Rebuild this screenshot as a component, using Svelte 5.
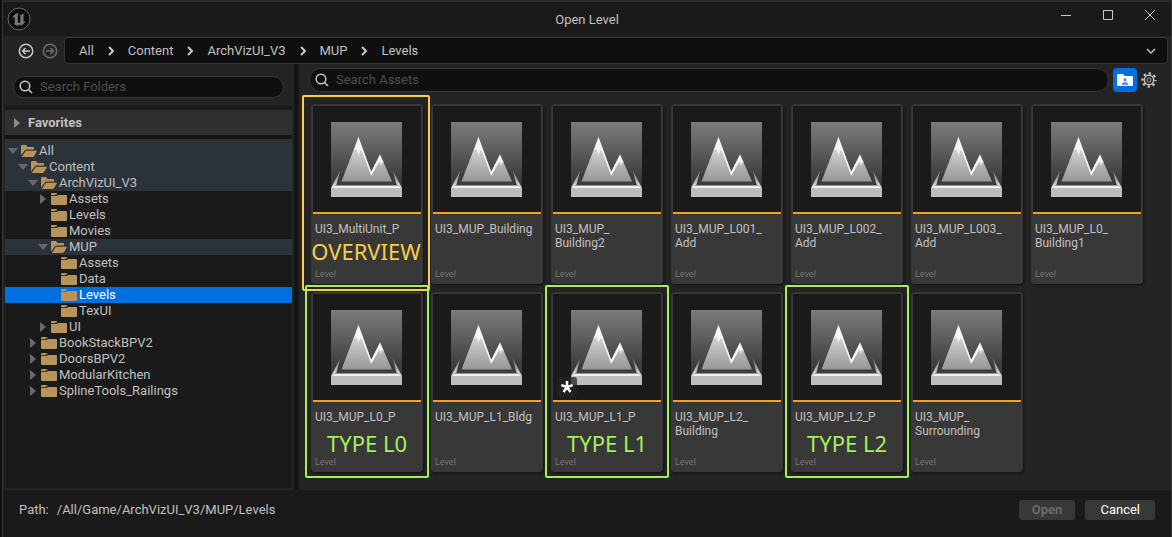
<script>
  const crumbs = ['All', 'Content', 'ArchVizUI_V3', 'MUP', 'Levels'];

  const folders = [
    { name: 'All', depth: 0, state: 'open', parent: true },
    { name: 'Content', depth: 1, state: 'open', parent: true },
    { name: 'ArchVizUI_V3', depth: 2, state: 'open', parent: true },
    { name: 'Assets', depth: 3, state: 'closed' },
    { name: 'Levels', depth: 3 },
    { name: 'Movies', depth: 3 },
    { name: 'MUP', depth: 3, state: 'open', parent: true },
    { name: 'Assets', depth: 4 },
    { name: 'Data', depth: 4 },
    { name: 'Levels', depth: 4 },
    { name: 'TexUI', depth: 4 },
    { name: 'UI', depth: 3, state: 'closed' },
    { name: 'BookStackBPV2', depth: 2, state: 'closed' },
    { name: 'DoorsBPV2', depth: 2, state: 'closed' },
    { name: 'ModularKitchen', depth: 2, state: 'closed' },
    { name: 'SplineTools_Railings', depth: 2, state: 'closed' },
  ];

  const assets = [
    { lines: ['UI3_MultiUnit_P'], note: 'OVERVIEW', kind: 'overview' },
    { lines: ['UI3_MUP_Building'] },
    { lines: ['UI3_MUP_', 'Building2'] },
    { lines: ['UI3_MUP_L001_', 'Add'] },
    { lines: ['UI3_MUP_L002_', 'Add'] },
    { lines: ['UI3_MUP_L003_', 'Add'] },
    { lines: ['UI3_MUP_L0_', 'Building1'] },
    { lines: ['UI3_MUP_L0_P'], note: 'TYPE L0', kind: 'type' },
    { lines: ['UI3_MUP_L1_Bldg'] },
    { lines: ['UI3_MUP_L1_P'], note: 'TYPE L1', kind: 'type', dirty: true },
    { lines: ['UI3_MUP_L2_', 'Building'] },
    { lines: ['UI3_MUP_L2_P'], note: 'TYPE L2', kind: 'type' },
    { lines: ['UI3_MUP_', 'Surrounding'] },
  ];

  let selected = $state(9);
  let folderQuery = $state('');
  let assetQuery = $state('');
</script>

<svelte:head>
  <title>Open Level</title>
</svelte:head>

{#snippet magnifier()}
  <svg class="magnifier" viewBox="0 0 14 14" aria-hidden="true">
    <circle cx="6" cy="6" r="4.8" />
    <path d="M9.5 9.5L13 13" />
  </svg>
{/snippet}

<!-- shared gradients for the level thumbnails -->
<svg class="defs" width="0" height="0" aria-hidden="true">
  <defs>
    <linearGradient id="sky" x1="0" y1="0" x2="0" y2="1">
      <stop offset="0" stop-color="#7c7c7c" />
      <stop offset="1" stop-color="#333" />
    </linearGradient>
    <linearGradient id="rock" x1="0" y1="0" x2="0" y2="1">
      <stop offset="0" stop-color="#e8e8e8" />
      <stop offset="1" stop-color="#979797" />
    </linearGradient>
    <linearGradient id="edge" x1="0" y1="0" x2="0" y2="1">
      <stop offset="0" stop-color="#999" stop-opacity="0.5" />
      <stop offset="1" stop-color="#f0f0f0" />
    </linearGradient>
  </defs>
</svg>

<div class="window">
  <header class="titlebar">
    <svg class="logo" viewBox="0 0 24 24" aria-hidden="true">
      <circle cx="12" cy="12" r="11" fill="#0c0c0c" stroke="#6c6c6c" />
      <path
        fill="#777"
        d="M10.6 6.1C8 6.9 5.9 8.8 5 12c.8-1.300 1.500-2 2.100-2 .5 0 .6.3.6.8v4.600c0 .7-.3.9-.9.8.9 1.400 2.400 2.300 4.300 2.500l1.300-1.300 1.400 1.100c2.200-.8 3.900-2.400 4.900-4.700-.7.7-1.300 1-1.700.9-.4-.1-.5-.3-.5-.8V8.700c0-.9.5-1.700 1.200-2.500-1.500.3-2.700 1-3.600 2-.4-.5-.8-.6-1.500-.7.5.4.7.8.7 1.400v6.300c-.3.4-.8.700-1.300.7-.8 0-1.200-.5-1.200-1.300V8.200c0-.9.200-1.500.8-2.100z"
      />
    </svg>
    <h1>Open Level</h1>
    <div class="controls">
      <button aria-label="Minimize">
        <svg viewBox="0 0 12 12"><path d="M1 6.500h10" /></svg>
      </button>
      <button aria-label="Maximize">
        <svg viewBox="0 0 12 12"><path d="M1.500 1.500h9v9h-9z" /></svg>
      </button>
      <button aria-label="Close">
        <svg viewBox="0 0 12 12"><path d="M1 1l10 10M11 1L1 11" /></svg>
      </button>
    </div>
  </header>

  <nav class="navbar">
    <div class="arrows">
      <button aria-label="Back">
        <svg viewBox="0 0 16 16">
          <circle cx="8" cy="8" r="6.700" />
          <path d="M12 8H4.800M7.500 5L4.500 8l3 3" />
        </svg>
      </button>
      <button aria-label="Forward" disabled>
        <svg viewBox="0 0 16 16">
          <circle cx="8" cy="8" r="6.700" />
          <path d="M4 8h7.200M8.500 5l3 3-3 3" />
        </svg>
      </button>
    </div>
    <div class="path-bar">
      {#each crumbs as crumb, i}
        {#if i > 0}
          <svg class="chevron" viewBox="0 0 8 10" aria-hidden="true"><path d="M2 1l4 4-4 4" /></svg>
        {/if}
        <a href="#{crumb}">{crumb}</a>
      {/each}
      <button class="history" aria-label="Path history">
        <svg viewBox="0 0 10 8"><path d="M1 2l4 4 4-4" /></svg>
      </button>
    </div>
  </nav>

  <div class="body">
    <aside class="sources">
      <label class="search">
        {@render magnifier()}
        <input type="text" aria-label="Search Folders" placeholder="Search Folders" bind:value={folderQuery} />
      </label>

      <button class="favorites">
        <svg viewBox="0 0 6 10" aria-hidden="true"><path d="M0 0l6 5-6 5z" /></svg>
        Favorites
      </button>

      <div class="tree">
        {#each folders as folder, i}
          <button
            class="row"
            class:parent={folder.parent}
            class:selected={selected === i}
            style="padding-left: {3 + folder.depth * 10}px"
            onclick={() => (selected = i)}
          >
            <svg class="expander" viewBox="0 0 10 10" aria-hidden="true">
              {#if folder.state === 'open'}
                <path d="M0 2h10L5 8z" />
              {:else if folder.state === 'closed'}
                <path d="M2 0l6 5-6 5z" />
              {/if}
            </svg>
            <svg class="folder" viewBox="0 0 16 12" aria-hidden="true">
              {#if folder.state === 'open'}
                <path d="M0 10.500V1q0-1 1-1h4l1.500 2H12q1 0 1 1v1.500H5.500q-1 0-1.500.8z" />
                <path d="M.8 12l3.700-5.700q.3-.5 1-.5H15.500q.7 0 .3.700L12.900 11.300q-.4.700-1.200.7z" />
              {:else}
                <path d="M0 2.200V1q0-1 1-1h4.500l1.200 1.400h-2.500L4.900 2.200z" />
                <path d="M0 3h6l.8-1H15q1 0 1 1v8q0 1-1 1H1q-1 0-1-1z" />
              {/if}
            </svg>
            <span>{folder.name}</span>
          </button>
        {/each}
      </div>
    </aside>

    <main class="assets">
      <div class="toolbar">
        <label class="search">
          {@render magnifier()}
          <input type="text" aria-label="Search Assets" placeholder="Search Assets" bind:value={assetQuery} />
        </label>
        <button class="toggle" aria-label="Show developer folders">
          <svg viewBox="0 0 16 14">
            <path fill="#fff" d="M0 2q0-1 1-1h5l1.500 2H15q1 0 1 1v8q0 1-1 1H1q-1 0-1-1z" />
            <circle cx="8" cy="6.800" r="1.800" fill="#5b9be0" />
            <path fill="#5b9be0" d="M4.500 12q0-3 3.500-3t3.500 3z" />
          </svg>
        </button>
        <button class="gear" aria-label="Settings">
          <svg viewBox="0 0 16 16">
            <circle cx="8" cy="8" r="6.500" stroke-width="2.400" stroke-dasharray="2.300 2.805" stroke-dashoffset="1.150" />
            <circle cx="8" cy="8" r="4.700" stroke-width="1.500" />
            <circle cx="8" cy="8" r="1.900" stroke-width="1.200" stroke="#888" />
          </svg>
        </button>
      </div>

      <div class="grid">
        {#each assets as asset}
          <article class="card">
            <div class="thumb">
              <svg viewBox="0 0 72 75" aria-hidden="true">
                <path fill="url(#sky)" d="M0 0h71v65H0z" />
                <path fill="#3c3c3c" d="M8 52h55l4 12H4z" />
                <path fill="url(#edge)" d="M9.500 48L5.500 62.500 0 66z" />
                <path fill="url(#edge)" d="M61.500 48l4 14.500L71 66z" />
                <path fill="url(#rock)" d="M10.500 59.500L27.500 15l12.700 36.500L49 32.500l12 27z" />
                <path fill="#f4f4f4" d="M27.500 15l12.700 34.500L49 32.500l4 9-2-1.500-1.200 4-1.300-4.500L40.200 54 31 29.500l-1.500-1.500-2.200 5-1.500-5.500-2.800 1z" />
                <path fill="#f0f0f0" d="M4 63.500h63l4 2.500H0z" />
                <path fill="#bdbdbd" d="M0 66h71v9H0z" />
              </svg>
              {#if asset.dirty}
                <span class="dirty">
                  <svg viewBox="0 0 12 12" aria-label="Unsaved">
                    <path d="M6 6V0M6 6l5.700-1.900M6 6l3.500 4.900M6 6l-3.500 4.900M6 6L.3 4.100" />
                  </svg>
                </span>
              {/if}
            </div>
            <div class="info">
              <h2>
                {#each asset.lines as line}
                  <span>{line}</span>
                {/each}
              </h2>
              <small>Level</small>
            </div>
            {#if asset.note}
              <div class="note {asset.kind}">{asset.note}</div>
            {/if}
          </article>
        {/each}
      </div>
    </main>
  </div>

  <footer>
    <span>Path:</span>
    <span class="path">/All/Game/ArchVizUI_V3/MUP/Levels</span>
    <button class="open" disabled>Open</button>
    <button class="cancel">Cancel</button>
  </footer>
</div>

<style>
:global(body) {
  margin: 0;
  background: #0f0f0f;
}

.defs {
  position: absolute;
}

.window {
  display: flex;
  flex-direction: column;
  box-sizing: border-box;
  min-height: 100vh;
  border: 1px solid #363636;
  border-top: 2px solid #2a2a2a;
  border-bottom: none;
  margin-left: 2px;
  background: #1a1a1a;
  color: #c0c0c0;
  font-family: Roboto, "Liberation Sans", sans-serif;
  font-size: 13px;
  line-height: 16px;
}

button {
  padding: 0;
  border: none;
  background: none;
  color: inherit;
  font: inherit;
  cursor: pointer;
}

svg {
  display: block;
  flex: none;
}

/* Title bar */
.titlebar {
  display: grid;
  grid-template-columns: 1fr auto 1fr;
  align-items: center;
  height: 34px;
}
.logo {
  width: 24px;
  height: 24px;
  margin-left: 4px;
}
.titlebar h1 {
  margin: 2px 0 0;
  font-size: 13px;
  font-weight: 400;
}
.controls {
  display: flex;
  justify-content: flex-end;
  gap: 30px;
  padding: 0 15px 8px 0;
}
.controls svg {
  width: 12px;
  height: 12px;
  fill: none;
  stroke: #c8c8c8;
}

/* Back / forward and breadcrumbs */
.navbar {
  display: flex;
  align-items: center;
  gap: 6px;
  padding: 1px 3px 0 15px;
  background: #242424;
}
.arrows {
  display: flex;
  gap: 8px;
}
.arrows svg {
  width: 16px;
  height: 16px;
  fill: none;
  stroke: #c8c8c8;
  stroke-width: 1.5;
}
.arrows button:disabled svg {
  stroke: #6c6c6c;
}
.path-bar {
  display: flex;
  flex: 1;
  align-items: center;
  gap: 13px;
  box-sizing: border-box;
  height: 27px;
  padding: 0 11px 0 14px;
  border: 1px solid #363636;
  border-radius: 4px;
  background: #0f0f0f;
}
.path-bar a {
  color: inherit;
  text-decoration: none;
}
.chevron {
  width: 8px;
  height: 10px;
  fill: none;
  stroke: #c8c8c8;
  stroke-width: 2;
}
.history {
  margin-left: auto;
}
.history svg {
  width: 10px;
  height: 8px;
  fill: none;
  stroke: #c0c0c0;
  stroke-width: 1.5;
}

.body {
  display: flex;
  flex: 1;
  background: #151515;
}

/* Search boxes */
.search {
  display: flex;
  align-items: center;
  gap: 7px;
  box-sizing: border-box;
  height: 24px;
  padding: 0 5px;
  border: 1px solid #363636;
  border-radius: 12px;
  background: #0f0f0f;
}
.magnifier {
  width: 14px;
  height: 14px;
  fill: none;
  stroke: #c8c8c8;
  stroke-width: 1.5;
}
.search input {
  flex: 1;
  min-width: 0;
  padding: 0;
  border: none;
  outline: none;
  background: none;
  color: #c0c0c0;
  font: inherit;
}
.search input::placeholder {
  color: #4e4e4e;
  opacity: 1;
}

/* Folder tree */
.sources {
  display: flex;
  flex-direction: column;
  box-sizing: border-box;
  width: 291px;
  padding: 0 2px 2px;
  background: #242424;
}
.sources .search {
  height: 22px;
  margin: 12px 8px 8px;
}
.favorites {
  display: flex;
  align-items: center;
  gap: 8px;
  height: 33px;
  padding: 0 9px;
  border-top: 4px solid #1a1a1a;
  border-bottom: 4px solid #151515;
  background: #2f2f2f;
  font-weight: 700;
}
.favorites svg {
  width: 6px;
  height: 10px;
  fill: #8c8c8c;
}
.tree {
  flex: 1;
  background: #1a1a1a;
}
.row {
  display: flex;
  align-items: center;
  width: 100%;
  height: 16px;
}
.row:first-child {
  padding-top: 4px;
  height: 20px;
}
.row.parent {
  background: #2c323a;
}
.row.selected {
  background: #0070e0;
  color: #fff;
}
.expander {
  width: 10px;
  height: 10px;
  margin-right: 3px;
  fill: #69696b;
}
.folder {
  width: 16px;
  height: 12px;
  margin-right: 2px;
  fill: #b8935a;
}

/* Asset view */
.assets {
  flex: 1;
  min-width: 0;
  margin-left: 5px;
  background: #242424;
}
.toolbar {
  display: flex;
  align-items: center;
  gap: 4px;
  padding: 4px 14px 12px 10px;
}
.toolbar .search {
  flex: 1;
}
.toggle {
  display: grid;
  place-items: center;
  width: 24px;
  height: 24px;
  border-radius: 4px;
  background: #0070e0;
}
.toggle svg {
  width: 16px;
  height: 14px;
}
.gear svg {
  width: 16px;
  height: 16px;
  fill: none;
  stroke: #c0c0c0;
}
.grid {
  display: grid;
  grid-template-columns: repeat(auto-fill, 112px);
  gap: 8px;
  padding: 0 12px 18px;
}
.card {
  position: relative;
  display: flex;
  flex-direction: column;
  box-sizing: border-box;
  height: 180px;
  border: 2px solid #383838;
  border-radius: 4px;
  background: #383838;
  box-shadow: 1px 1px 3px #111;
}
.thumb {
  position: relative;
  display: flex;
  justify-content: center;
  padding: 16px 0 15px;
  border-bottom: 2px solid #f0a01e;
  background: #1a1a1a;
}
.thumb > svg {
  width: 72px;
  height: 75px;
}
.dirty {
  position: absolute;
  left: 4px;
  bottom: 3px;
  padding: 4px;
  border-radius: 3px;
  background: rgba(36, 36, 36, 0.75);
}
.dirty svg {
  width: 12px;
  height: 12px;
  stroke: #fff;
  stroke-width: 2.5;
}
.info {
  display: flex;
  flex: 1;
  flex-direction: column;
  justify-content: space-between;
  padding: 8px 2px 3px;
}
.info h2 {
  margin: 0;
  font-size: 12px;
  font-weight: 400;
  line-height: 14px;
}
.info h2 span {
  display: block;
}
.info small {
  color: #757575;
  font-size: 9px;
  line-height: 10px;
}

/* Markers drawn over single cards */
.note {
  position: absolute;
  z-index: 1;
  box-sizing: border-box;
  border: 2px solid;
  border-radius: 2px;
  font-family: "Noto Sans", "Open Sans", sans-serif;
  font-size: 22px;
  line-height: 22px;
  text-align: center;
  white-space: nowrap;
}
.note.overview {
  inset: -11px -9px -9px -11px;
  padding-top: 143px;
  color: #f5cf45;
}
.note.type {
  inset: -9px -8px -8px;
  padding-top: 145px;
  color: #a4f05a;
}

/* Bottom bar */
footer {
  display: flex;
  align-items: center;
  box-sizing: border-box;
  height: 47px;
  padding: 0 16px 7px;
}
footer .path {
  margin-left: 8px;
  margin-right: auto;
}
footer button {
  height: 20px;
  margin-left: 10px;
  border-radius: 3px;
  background: #383838;
}
.open {
  padding: 0 13px;
  color: #6a6a6a;
  font-weight: 700;
}
.cancel {
  padding: 0 15px;
  color: #fff;
}
</style>
